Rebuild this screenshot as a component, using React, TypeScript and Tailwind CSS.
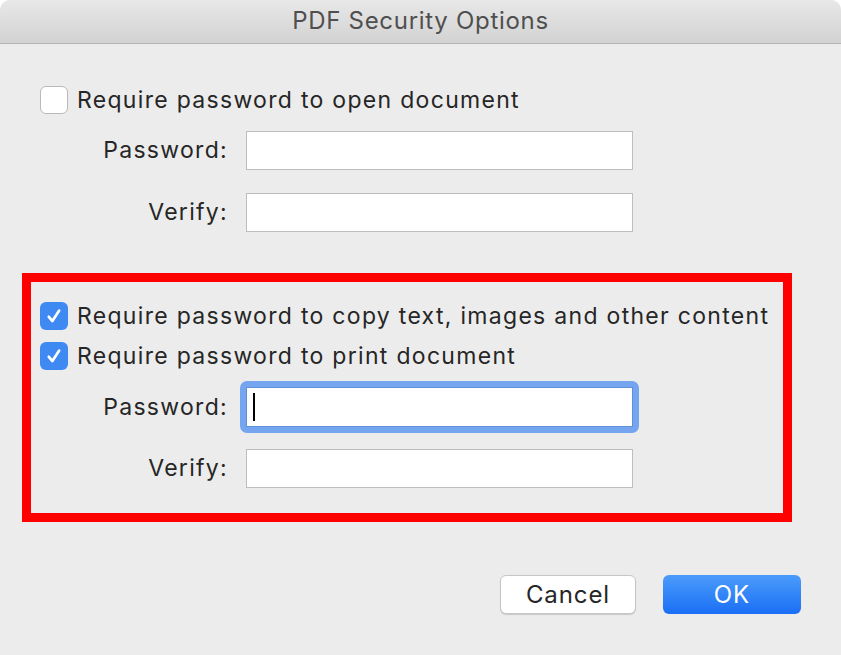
import { useState } from "react";

function Check({ checked }: { checked: boolean }) {
  return checked ? (
    <span className="flex h-[28px] w-[28px] shrink-0 items-center justify-center rounded-[6px] bg-[#3f89f2]">
      <svg viewBox="0 0 20 20" className="h-[20px] w-[20px]">
        <path d="M4.8 10.8 L8.4 15 L15.2 4.6" fill="none" stroke="white" strokeWidth="2.7" strokeLinecap="round" strokeLinejoin="round" />
      </svg>
    </span>
  ) : (
    <span className="block h-[28px] w-[28px] shrink-0 rounded-[6px] border border-[#b9b9b9] bg-white" />
  );
}

function Option({ label, checked }: { label: string; checked: boolean }) {
  return (
    <div className="flex h-[28px] items-center gap-[9px] leading-none">
      <Check checked={checked} />
      <span>{label}</span>
    </div>
  );
}

function Field({ label, labelWidth, focused }: { label: string; labelWidth: number; focused?: boolean }) {
  return (
    <div className="flex items-center leading-none">
      <span className="text-right" style={{ width: labelWidth }}>
        {label}
      </span>
      {focused ? (
        <div className="ml-[12px] rounded-[7px] bg-[#74a5ee] p-[6px]">
          <div className="flex h-[40px] w-[387px] items-center border border-[#5e8fd8] bg-white pl-[6px]">
            <span className="block h-[28px] w-[2px] bg-black" />
          </div>
        </div>
      ) : (
        <div className="ml-[18px] h-[39px] w-[387px] border border-[#bdbdbd] bg-white" />
      )}
    </div>
  );
}

export default function App() {
  const [copy] = useState(true);
  return (
    <div
      className="h-[655px] w-[841px] overflow-hidden bg-white text-[23px] tracking-[1.3px] text-[#262626]"
      style={{ fontFamily: "Inter, 'Liberation Sans', sans-serif" }}
    >
      <div className="flex h-full flex-col rounded-t-[10px] bg-[#ececec]">
        <div className="flex h-[44px] shrink-0 items-center justify-center rounded-t-[10px] border-b border-[#b5b5b5] bg-gradient-to-b from-[#e8e8e8] to-[#d2d2d2] pb-[1px] text-[24px] tracking-[0.7px] text-[#4f4f4f]">
          PDF Security Options
        </div>

        <div className="flex flex-col pl-[40px] pt-[42px]">
          <Option label="Require password to open document" checked={false} />
        </div>
        <div className="mt-[17px] flex flex-col gap-[23px]">
          <Field label="Password:" labelWidth={228} />
          <Field label="Verify:" labelWidth={228} />
        </div>

        <div className="ml-[22px] mt-[41px] h-[249px] w-[770px] shrink-0 border-[9px] border-[#fe0000] pt-[20px]">
          <div className="flex flex-col gap-[12px] pl-[9px]">
            <Option label="Require password to copy text, images and other content" checked={copy} />
            <Option label="Require password to print document" checked={copy} />
          </div>
          <div className="mt-[11px] flex flex-col gap-[16px]">
            <Field label="Password:" labelWidth={197} focused />
            <Field label="Verify:" labelWidth={197} />
          </div>
        </div>

        <div className="mt-[53px] flex justify-end gap-[27px] pr-[40px]">
          <button className="h-[39px] w-[136px] rounded-[6px] border border-[#c6c6c6] bg-white text-[24px] tracking-[0.9px] shadow-[0_1px_1px_rgba(0,0,0,0.15)]">
            Cancel
          </button>
          <button className="h-[39px] w-[138px] rounded-[6px] bg-gradient-to-b from-[#4b9bfa] to-[#1a6ef5] text-[24px] tracking-[0.9px] text-white">
            OK
          </button>
        </div>
      </div>
    </div>
  );
}
